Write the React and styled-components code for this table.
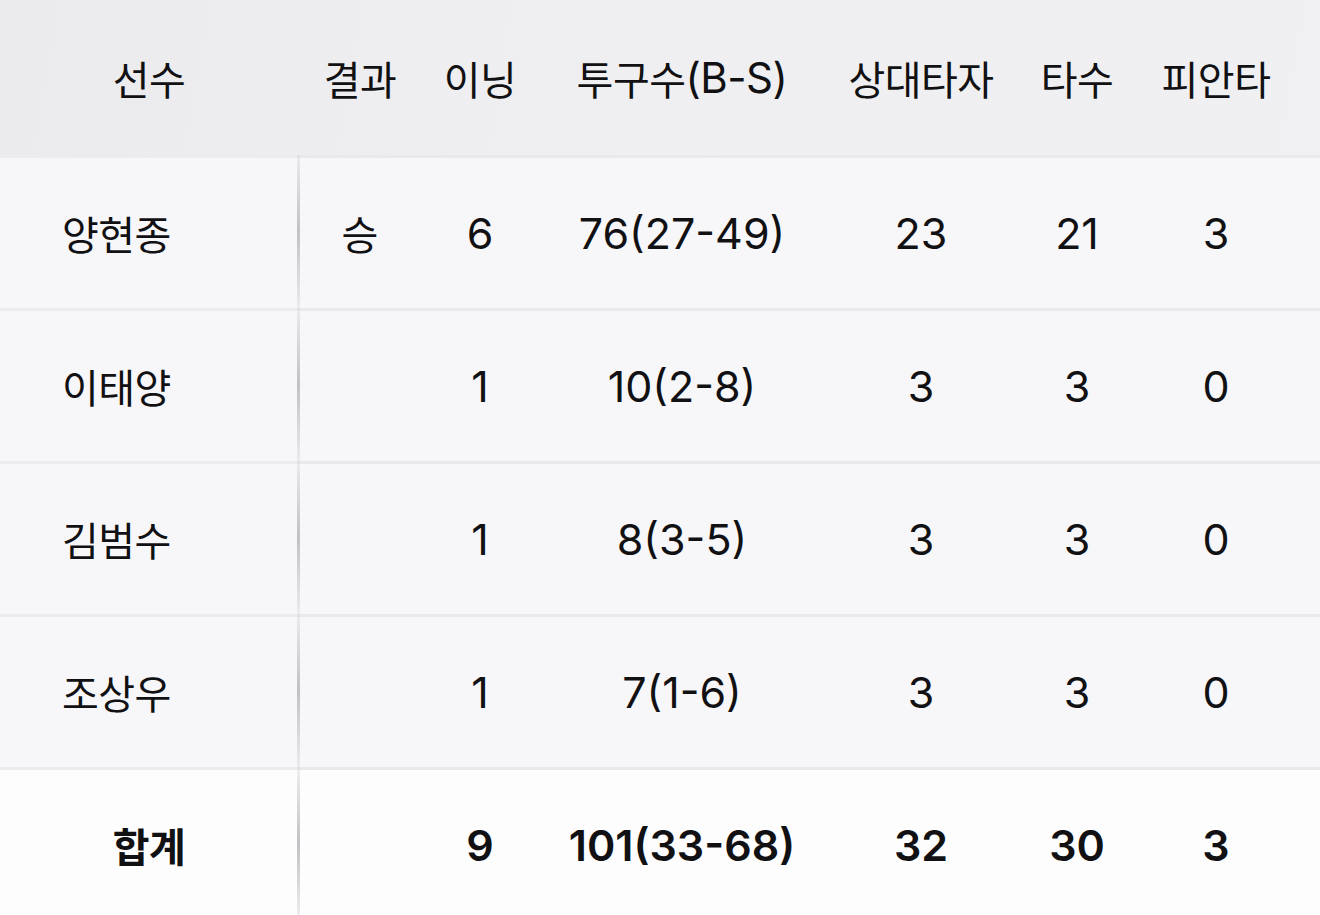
import React from "react";
import styled, { createGlobalStyle } from "styled-components";

const GlobalStyle = createGlobalStyle`
  html, body {
    margin: 0;
    padding: 0;
    background: #ffffff;
  }
  body {
    font-family: Inter, "Noto Sans CJK KR", sans-serif;
    color: #111113;
    -webkit-font-smoothing: antialiased;
  }
`;

// columns: player | result | innings | pitches | batters faced | at bats | hits | (cut off)
const COLUMNS = "298px 124px 116px 288px 190px 122px 156px 180px";

const Table = styled.div`
  width: 1320px;
  height: 915px;
  overflow: hidden;
  display: flex;
  flex-direction: column;
`;

const HeadRow = styled.div`
  display: grid;
  grid-template-columns: ${COLUMNS};
  height: 155px;
  flex-shrink: 0;
  background: linear-gradient(100deg, #ebebed 0%, #efeff1 40%, #f0f0f2 100%);
`;

const HeadCell = styled.div`
  display: flex;
  align-items: center;
  justify-content: center;
  font-size: 40px;
  font-weight: 400;
  letter-spacing: -0.5px;
  white-space: nowrap;
`;

const Latin = styled.span`
  font-size: 42px;
`;

const Row = styled.div`
  display: grid;
  grid-template-columns: ${COLUMNS};
  height: 153px;
  flex-shrink: 0;
  background: ${(p) => (p.$total ? "#fdfdfd" : "#f7f7f9")};
  font-weight: ${(p) => (p.$total ? 600 : 400)};
`;

const Cell = styled.div`
  display: flex;
  align-items: center;
  justify-content: center;
  font-size: ${(p) => (p.$num ? "43px" : "40px")};
  white-space: nowrap;
  border-top: 3px solid #e9e9ec;
  box-sizing: border-box;
`;

const NameCell = styled(Cell)`
  position: relative;
  justify-content: ${(p) => (p.$center ? "center" : "flex-start")};
  padding-left: ${(p) => (p.$center ? "0" : "62px")};
  letter-spacing: -0.5px;
  border-top-color: #ececef;

  &::after {
    content: "";
    position: absolute;
    top: -3px;
    bottom: 0;
    right: -2px;
    width: 3px;
    background: linear-gradient(
      180deg,
      rgba(200, 200, 204, 0.25) 0%,
      rgba(190, 190, 194, 0.95) 50%,
      rgba(200, 200, 204, 0.25) 100%
    );
  }
`;

const headers = ["선수", "결과", "이닝", "투구수", "상대타자", "타수", "피안타", ""];

const pitchers = [
  { name: "양현종", result: "승", ip: "6", pitches: "76(27-49)", tbf: "23", ab: "21", h: "3" },
  { name: "이태양", result: "", ip: "1", pitches: "10(2-8)", tbf: "3", ab: "3", h: "0" },
  { name: "김범수", result: "", ip: "1", pitches: "8(3-5)", tbf: "3", ab: "3", h: "0" },
  { name: "조상우", result: "", ip: "1", pitches: "7(1-6)", tbf: "3", ab: "3", h: "0" },
];

const total = { name: "합계", result: "", ip: "9", pitches: "101(33-68)", tbf: "32", ab: "30", h: "3" };

const StatRow = ({ p, isTotal }) => (
  <Row $total={isTotal}>
    <NameCell $center={isTotal}>{p.name}</NameCell>
    <Cell>{p.result}</Cell>
    <Cell $num>{p.ip}</Cell>
    <Cell $num>{p.pitches}</Cell>
    <Cell $num>{p.tbf}</Cell>
    <Cell $num>{p.ab}</Cell>
    <Cell $num>{p.h}</Cell>
    <Cell />
  </Row>
);

export default function App() {
  return (
    <>
      <GlobalStyle />
      <Table>
        <HeadRow>
          {headers.map((h, i) => (
            <HeadCell key={i}>
              {h}
              {h === "투구수" && <Latin>(B-S)</Latin>}
            </HeadCell>
          ))}
        </HeadRow>
        {pitchers.map((p) => (
          <StatRow key={p.name} p={p} />
        ))}
        <StatRow p={total} isTotal />
      </Table>
    </>
  );
}
